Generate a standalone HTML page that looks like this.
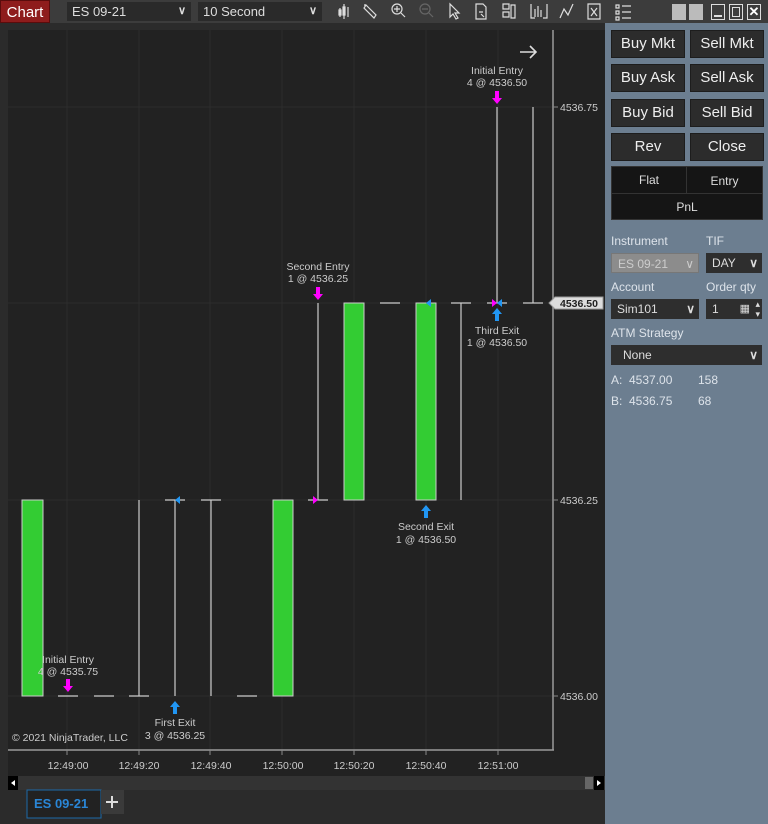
<!DOCTYPE html>
<html><head><meta charset="utf-8">
<style>
*{margin:0;padding:0;box-sizing:border-box}
body{width:768px;height:824px;background:#2b2b2b;font-family:"Liberation Sans",sans-serif;position:relative;overflow:hidden;color:#ddd}
.abs{position:absolute}
.top{left:0;top:0;width:768px;height:23px;background:#3c3c3c}
.chartbtn{left:0;top:0;width:50px;height:23px;background:#8e1c1c;color:#fff;font-size:15px;line-height:23px;text-align:center;border:1px solid #5a0c0c}
.sel{background:#2a2a2a;color:#ddd;font-size:13px;line-height:19px;padding-left:5px}
.sel b{position:absolute;right:5px;top:0;font-weight:bold;font-size:11px}
.panel{left:605px;top:23px;width:163px;height:801px;background:#6c7e90}
.btn{width:74px;height:28px;background:#2c2c2c;border:1px solid #1d1d1d;color:#eee;font-size:15px;text-align:center;line-height:26px}
.lbl{font-size:12px;color:#dde3ea}
.psel{background:#2e2e2e;color:#ddd;font-size:12px;line-height:20px;padding-left:6px;height:20px}
</style></head><body>
<div class="abs top"></div>
<div class="abs chartbtn">Chart</div>
<div class="abs sel" style="left:67px;top:2px;width:124px;height:19px">ES 09-21<b>&#8744;</b></div>
<div class="abs sel" style="left:198px;top:2px;width:124px;height:19px">10 Second<b>&#8744;</b></div>
<svg class="abs" style="left:330px;top:0" width="438" height="23" fill="none" stroke="#ddd" stroke-width="1.2">
<path d="M10 8v9M14 4v15M18 7v10M9 10h2v5h-2zM13 7h2v8h-2z"/>
<path d="M36 5l10 10-2 3-10-10zM34 5l2 0"/>
<circle cx="67" cy="9" r="5"/><path d="M71 13l4 4M64 9h6M67 6v6"/>
<circle cx="95" cy="9" r="5" stroke="#666"/><path d="M99 13l4 4M92 9h6" stroke="#666"/>
<path d="M120 4l0 13 3-3 3 5 2-1-3-5 4 0z"/>
<path d="M146 4h7l3 3v12h-10z M149 12h4 M151 14l3 3"/>
<path d="M173 4h6v5h-6zM173 12h6v5h-6zM181 5h4v13h-4z"/>
<path d="M201 4v14h4M217 4v14h-4M205 9v8M208 6v11M211 10v7"/>
<path d="M230 18l4-9 4 6 5-11"/>
<path d="M258 4h12v15h-12zM261 8l6 8M267 8l-6 8"/>
<path d="M286 5h3v3h-3zM286 11h3v3h-3zM286 17h3v3h-3zM292 6h9M292 12h9M292 18h9"/>
</svg>
<div class="abs" style="left:672px;top:4px;width:14px;height:16px;background:#bbb"></div>
<div class="abs" style="left:689px;top:4px;width:14px;height:16px;background:#bbb"></div>
<div class="abs" style="left:711px;top:4px;width:14px;height:16px;border:1px solid #ddd"><div style="position:absolute;left:2px;right:2px;bottom:2px;height:2px;background:#ddd"></div></div>
<div class="abs" style="left:729px;top:4px;width:14px;height:16px;border:1px solid #ddd"><div style="position:absolute;left:2px;right:2px;top:2px;bottom:2px;border:1px solid #ddd"></div></div>
<div class="abs" style="left:747px;top:4px;width:14px;height:16px;border:1px solid #ddd;color:#fff;font-size:13px;line-height:14px;text-align:center;font-weight:bold">✕</div>

<svg class="abs" style="left:0;top:23px" width="605" height="801">
<rect x="0" y="0" width="605" height="801" fill="#2b2b2b"/>
<rect x="8" y="7" width="597" height="746" fill="#222"/>
<g stroke="#2c2c2c" stroke-width="1">
<path d="M67 7v720M139 7v720M210 7v720M282 7v720M354 7v720M426 7v720M498 7v720"/>
<path d="M8 84h545M8 280h545M8 477h545M8 673h545"/>
</g>
<path d="M553 7v720M8 727h546" stroke="#9a9a9a" stroke-width="1.5"/>
<g stroke="#888"><path d="M553 84h5M553 280h5M553 477h5M553 673h5"/>
<path d="M67 727v5M139 727v5M210 727v5M282 727v5M354 727v5M426 727v5M498 727v5"/></g>
<g fill="#33cc33" stroke="#ccc" stroke-width="1">
<rect x="22" y="477" width="21" height="196"/>
<rect x="273" y="477" width="20" height="196"/>
<rect x="344" y="280" width="20" height="197"/>
<rect x="416" y="280" width="20" height="197"/>
</g>
<g stroke="#ccc" stroke-width="1.2">
<path d="M58 673h20M94 673h20M129 673h20M237 673h20"/>
<path d="M139 477v196M175 477v196M165 477h20M211 477v196M201 477h20"/>
<path d="M318 280v197M308 477h20"/>
<path d="M380 280h20M461 280v197M451 280h20M497 84v196M487 280h20M533 84v196M523 280h20"/>
</g>
<g fill="#2196f3"><path d="M175 477l5-4v8z"/><path d="M426 280l5-4v8z"/><path d="M497 280l5-4v8z"/>
<path d="M175 678l-5 6h3v7h4v-7h3z"/><path d="M426 482l-5 6h3v7h4v-7h3z"/><path d="M497 285l-5 6h3v7h4v-7h3z"/></g>
<g fill="#ff00ff"><path d="M318 477l-5-4v8z"/><path d="M497 280l-5-4v8z"/>
<path d="M68 669l-5-6h3v-7h4v7h3z"/><path d="M318 277l-5-6h3v-7h4v7h3z"/><path d="M497 81l-5-6h3v-7h4v7h3z"/></g>
<g fill="#ccc" font-size="10.5" text-anchor="middle" font-family="Liberation Sans">
<text x="68" y="640">Initial Entry</text><text x="68" y="652">4 @ 4535.75</text>
<text x="175" y="703">First Exit</text><text x="175" y="716">3 @ 4536.25</text>
<text x="318" y="247">Second Entry</text><text x="318" y="259">1 @ 4536.25</text>
<text x="426" y="507">Second Exit</text><text x="426" y="520">1 @ 4536.50</text>
<text x="497" y="51">Initial Entry</text><text x="497" y="63">4 @ 4536.50</text>
<text x="497" y="311">Third Exit</text><text x="497" y="323">1 @ 4536.50</text>
<text x="12" y="718" text-anchor="start">© 2021 NinjaTrader, LLC</text>
</g>
<g fill="#ccc" font-size="10.5" font-family="Liberation Sans">
<text x="560" y="88">4536.75</text><text x="560" y="481">4536.25</text><text x="560" y="677">4536.00</text>
</g>
<path d="M549 280l6-6h48v12h-48z" fill="#ddd" stroke="#999"/>
<text x="560" y="284" fill="#222" font-size="10.5" font-weight="bold" font-family="Liberation Sans">4536.50</text>
<path d="M520 29h16M530 23l6 6-6 6" stroke="#ddd" stroke-width="1.6" fill="none"/>
<g fill="#ccc" font-size="10.5" text-anchor="middle" font-family="Liberation Sans">
<text x="68" y="746">12:49:00</text><text x="139" y="746">12:49:20</text><text x="211" y="746">12:49:40</text><text x="283" y="746">12:50:00</text><text x="354" y="746">12:50:20</text><text x="426" y="746">12:50:40</text><text x="498" y="746">12:51:00</text>
</g>
<rect x="8" y="753" width="597" height="14" fill="#333"/>
<rect x="8" y="753" width="10" height="14" fill="#000"/><path d="M15 757l-4 3 4 3z" fill="#fff"/>
<rect x="594" y="753" width="10" height="14" fill="#000"/><path d="M597 757l4 3-4 3z" fill="#fff"/>
<rect x="585" y="754" width="8" height="12" fill="#666"/>
<rect x="27" y="767" width="74" height="28" fill="#222" stroke="#1c6aa8"/>
<text x="34" y="785" fill="#2a86d6" font-size="13" font-weight="bold" font-family="Liberation Sans">ES 09-21</text>
<rect x="101" y="767" width="23" height="24" fill="#3a3a3a"/>
<path d="M112 773v12M106 779h12" stroke="#ddd" stroke-width="2"/>
</svg>

<div class="abs panel"></div>
<div class="abs btn" style="left:611px;top:30px">Buy Mkt</div>
<div class="abs btn" style="left:690px;top:30px">Sell Mkt</div>
<div class="abs btn" style="left:611px;top:64px">Buy Ask</div>
<div class="abs btn" style="left:690px;top:64px">Sell Ask</div>
<div class="abs btn" style="left:611px;top:99px">Buy Bid</div>
<div class="abs btn" style="left:690px;top:99px">Sell Bid</div>
<div class="abs btn" style="left:611px;top:133px">Rev</div>
<div class="abs btn" style="left:690px;top:133px">Close</div>
<div class="abs" style="left:611px;top:166px;width:152px;height:54px;background:#151515;border:1px solid #333"></div>
<div class="abs" style="left:686px;top:167px;width:1px;height:26px;background:#333"></div>
<div class="abs" style="left:612px;top:193px;width:150px;height:1px;background:#333"></div>
<div class="abs" style="left:612px;top:173px;width:74px;text-align:center;font-size:12px;color:#ddd">Flat</div>
<div class="abs" style="left:687px;top:174px;width:75px;text-align:center;font-size:12px;color:#ddd">Entry</div>
<div class="abs" style="left:612px;top:200px;width:150px;text-align:center;font-size:12px;color:#ddd">PnL</div>
<div class="abs lbl" style="left:611px;top:234px">Instrument</div>
<div class="abs lbl" style="left:706px;top:234px">TIF</div>
<div class="abs psel" style="left:611px;top:253px;width:88px;background:#8c8c8c;color:#ccc;border:1px solid #777">ES 09-21<span style="position:absolute;right:4px">&#8744;</span></div>
<div class="abs psel" style="left:706px;top:253px;width:56px">DAY<b style="position:absolute;right:4px">&#8744;</b></div>
<div class="abs lbl" style="left:611px;top:280px">Account</div>
<div class="abs lbl" style="left:706px;top:280px">Order qty</div>
<div class="abs psel" style="left:611px;top:299px;width:88px">Sim101<b style="position:absolute;right:4px">&#8744;</b></div>
<div class="abs psel" style="left:706px;top:299px;width:56px">1<span style="position:absolute;right:12px;font-size:11px">▦</span><span style="position:absolute;right:2px;font-size:9px;line-height:10px">▴<br>▾</span></div>
<div class="abs lbl" style="left:611px;top:326px">ATM Strategy</div>
<div class="abs psel" style="left:611px;top:345px;width:151px;padding-left:12px">None<b style="position:absolute;right:4px">&#8744;</b></div>
<div class="abs lbl" style="left:611px;top:373px">A:&nbsp; 4537.00</div>
<div class="abs lbl" style="left:698px;top:373px">158</div>
<div class="abs lbl" style="left:611px;top:394px">B:&nbsp; 4536.75</div>
<div class="abs lbl" style="left:698px;top:394px">68</div>
</body></html>
